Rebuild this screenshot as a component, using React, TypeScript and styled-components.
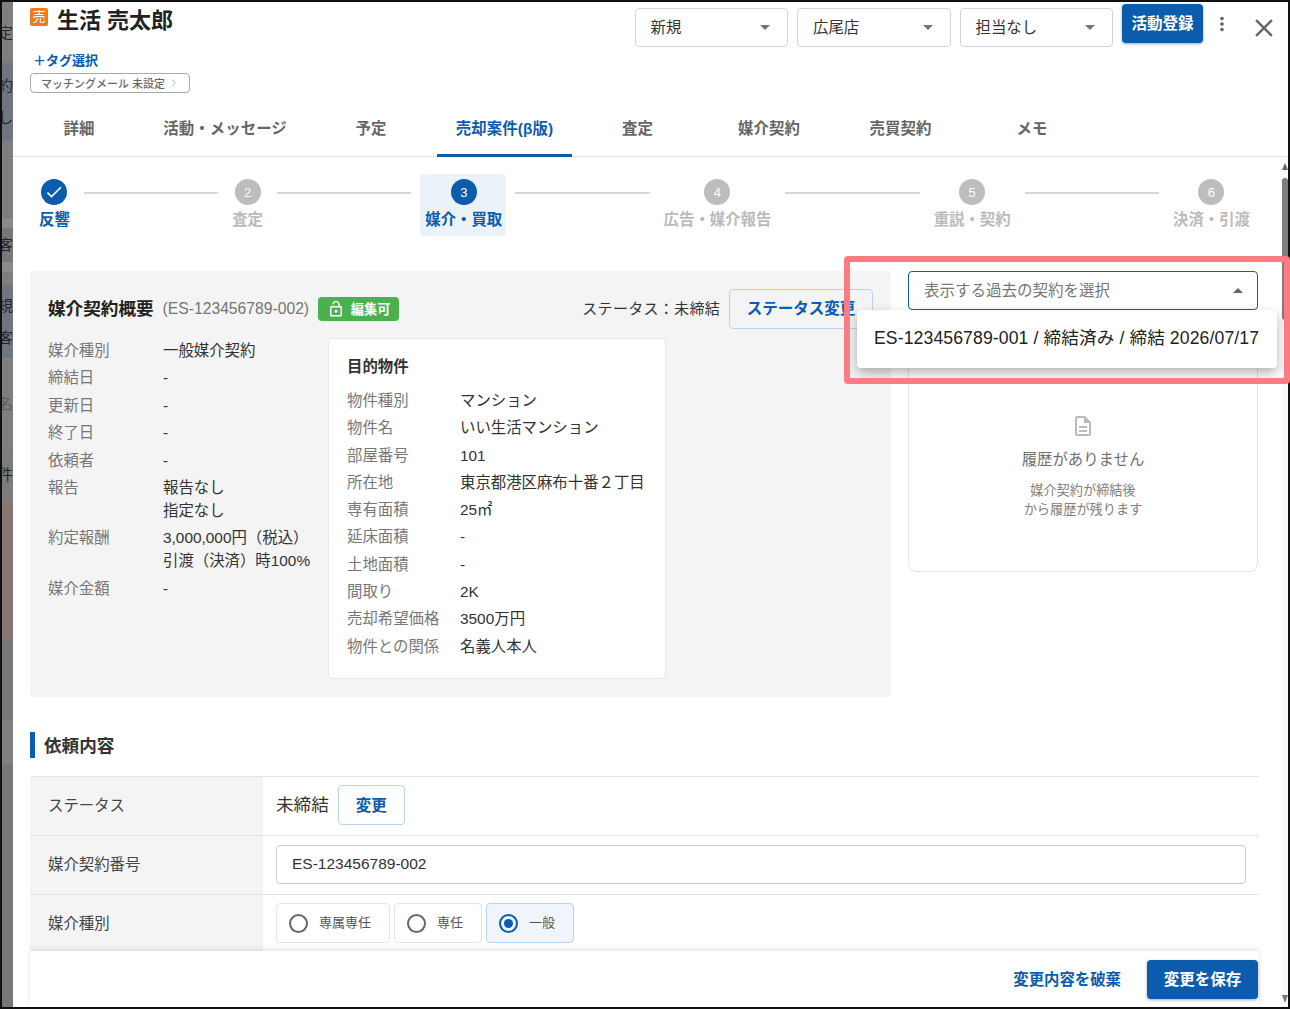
import React from 'react';
import styled, { createGlobalStyle } from 'styled-components';
import { ChevronRight } from 'lucide-react';

const blue = '#0b5cad';
const softBorder = '#b9d2ee';

const GlobalStyle = createGlobalStyle`
  html, body { margin: 0; padding: 0; background: #fff; }
  body {
    font-family: "Liberation Sans", "Noto Sans CJK JP", sans-serif;
    color: #333;
  }
  * { box-sizing: border-box; }
`;

const Page = styled.div`
  position: relative;
  width: 1290px;
  height: 1009px;
  overflow: hidden;
`;

const Frame = styled.div`
  position: relative;
  display: flex;
  width: 100%;
  height: 100%;
  border: 2px solid #111;
  overflow: hidden;
`;

const Backdrop = styled.div`
  flex: 0 0 11px;
  display: flex;
  flex-direction: column;
  overflow: hidden;
`;

const Band = styled.div<{ $h: number; $bg: string; $faded?: boolean }>`
  flex: 0 0 ${p => p.$h}px;
  display: flex;
  flex-direction: column;
  justify-content: center;
  align-items: flex-end;
  gap: 12px;
  background: ${p => p.$bg};
  color: ${p => (p.$faded ? '#5e5e5e' : '#1f2630')};
  font-size: 15px;
  line-height: 20px;
  white-space: nowrap;
`;

const Modal = styled.div`
  flex: 1;
  min-width: 0;
  display: flex;
  flex-direction: column;
  background: #fff;
`;

const TopRow = styled.header`
  flex: 0 0 98px;
  display: flex;
  justify-content: space-between;
  align-items: flex-start;
  padding: 2px 9px 0 17px;
`;

const Identity = styled.div`
  display: flex;
  flex-direction: column;
  align-items: flex-start;
`;

const TitleRow = styled.div`
  display: flex;
  align-items: flex-start;
  gap: 9px;
  height: 30px;
  margin-top: 2px;
`;

const SellerMark = styled.span`
  width: 18px;
  height: 18px;
  margin-top: 2px;
  border-radius: 2px;
  background: #f07a1c;
  color: #fff;
  font-size: 13px;
  line-height: 18px;
  text-align: center;
`;

const Name = styled.h1`
  margin: 2px 0 0;
  font-size: 22px;
  line-height: 26px;
  font-weight: 700;
  color: #222;
`;

const TagLink = styled.a`
  margin: 15px 0 0 3px;
  font-size: 13px;
  line-height: 20px;
  font-weight: 700;
  color: ${blue};
`;

const MailPill = styled.div`
  display: flex;
  align-items: center;
  gap: 3px;
  width: 160px;
  height: 20px;
  margin-top: 2px;
  padding: 0 0 1px 10px;
  border: 1px solid #aaa;
  border-radius: 4px;
  font-size: 10.9px;
  font-weight: 500;
  letter-spacing: 0.1px;
  color: #666;
  white-space: nowrap;
`;

const Actions = styled.div`
  display: flex;
  align-items: flex-start;
  gap: 9px;
`;

const HeaderSelect = styled.div`
  display: flex;
  align-items: center;
  justify-content: space-between;
  width: 153.5px;
  height: 39px;
  margin-top: 4px;
  padding: 0 17px 3px 15px;
  border: 1px solid #d4d4d4;
  border-radius: 4px;
  font-size: 15.4px;
  color: #333;
`;

const Caret = styled.span<{ $up?: boolean }>`
  width: 0;
  height: 0;
  margin-top: 3px;
  border-left: 5px solid transparent;
  border-right: 5px solid transparent;
  ${p => (p.$up ? 'border-bottom: 5px solid #666;' : 'border-top: 5px solid #757575;')}
`;

const PrimaryButton = styled.button<{ $w: number }>`
  width: ${p => p.$w}px;
  height: 39px;
  padding: 0 0 3px;
  border: 0;
  border-radius: 4px;
  background: ${blue};
  color: #fff;
  font: inherit;
  font-size: 15.5px;
  font-weight: 700;
  box-shadow: 0 1px 3px rgba(0, 0, 0, 0.35);
`;

const IconSlot = styled.div<{ $ml: number }>`
  display: flex;
  margin: 9px 0 0 ${p => p.$ml}px;
`;

const Tabs = styled.nav`
  flex: 0 0 57px;
  display: flex;
  border-bottom: 1px solid #e2e2e2;
`;

const Tab = styled.div<{ $w: number; $active?: boolean }>`
  position: relative;
  flex: 0 0 ${p => p.$w}px;
  display: flex;
  align-items: center;
  justify-content: center;
  padding-bottom: 3px;
  font-size: 15.4px;
  font-weight: 700;
  letter-spacing: 0.1px;
  color: ${p => (p.$active ? blue : '#666')};
  white-space: nowrap;

  ${p =>
    p.$active &&
    `&::after {
      content: '';
      position: absolute;
      left: 0;
      right: 0;
      bottom: -1px;
      height: 3px;
      background: ${blue};
    }`}
`;

const Body = styled.main`
  flex: 1;
  min-height: 0;
  overflow: hidden;
  padding: 17px 29px 0 17px;
`;

const Stepper = styled.div`
  display: flex;
  align-items: flex-start;
  height: 62px;
  padding: 0 9px;
`;

const Step = styled.div<{ $current?: boolean }>`
  flex: none;
  display: flex;
  flex-direction: column;
  align-items: center;
  height: 62px;
  padding-top: 5px;
  ${p =>
    p.$current &&
    `margin: 0 -5px;
     padding-left: 5px;
     padding-right: 4px;
     background: #ebf2fa;
     border-radius: 4px;`}
`;

const StepDot = styled.span<{ $on?: boolean }>`
  display: flex;
  align-items: center;
  justify-content: center;
  width: 26px;
  height: 26px;
  border-radius: 50%;
  background: ${p => (p.$on ? blue : '#bdbdbd')};
  color: #fff;
  font-size: 13px;
`;

const StepLabel = styled.span<{ $on?: boolean }>`
  margin-top: 4px;
  font-size: 15.4px;
  line-height: 22px;
  font-weight: 700;
  color: ${p => (p.$on ? blue : '#bbb')};
  white-space: nowrap;
`;

const Connector = styled.span`
  flex: 1;
  height: 2px;
  margin: 18px 14px 0;
  background: #d6d6d6;
`;

const Overview = styled.div`
  display: flex;
  gap: 17px;
  margin-top: 35px;
`;

const SummaryCard = styled.section`
  flex: 0 0 861px;
  height: 426px;
  padding: 18px;
  border-radius: 4px;
  background: #f4f4f4;
`;

const SummaryHead = styled.div`
  display: flex;
  align-items: center;
  height: 39px;
`;

const SummaryTitle = styled.h2`
  margin: 0;
  padding-bottom: 3px;
  font-size: 17.6px;
  font-weight: 700;
  color: #222;
`;

const ContractNo = styled.span`
  margin-left: 9px;
  font-size: 15.7px;
  color: #757575;
`;

const EditBadge = styled.span`
  display: flex;
  align-items: center;
  justify-content: center;
  gap: 6px;
  width: 81px;
  height: 24px;
  margin-left: 9px;
  border-radius: 4px;
  background: #4caf50;
  color: #fff;
  font-size: 13.2px;
  font-weight: 700;
`;

const StatusText = styled.span`
  margin-left: auto;
  padding-bottom: 3px;
  font-size: 15px;
  letter-spacing: 0.3px;
  color: #333;
`;

const OutlineButton = styled.button<{ $w: number }>`
  width: ${p => p.$w}px;
  height: 40px;
  margin-left: 9px;
  padding: 0 0 3px;
  border: 1px solid ${softBorder};
  border-radius: 4px;
  background: transparent;
  color: ${blue};
  font: inherit;
  font-size: 15.5px;
  font-weight: 700;
  white-space: nowrap;
`;

const SummaryBody = styled.div`
  display: flex;
  align-items: flex-start;
  margin-top: 10px;
`;

const FactList = styled.dl<{ $w: number; $gap: number; $label: number; $top?: number }>`
  display: grid;
  grid-template-columns: ${p => p.$label}px 1fr;
  row-gap: ${p => p.$gap}px;
  width: ${p => p.$w}px;
  margin: ${p => p.$top ?? 0}px 0 0;
  font-size: 15.4px;
  line-height: 23px;
`;

const FactLabel = styled.dt`
  color: #777;
`;

const FactValue = styled.dd`
  margin: 0;
  color: #333;
  white-space: pre-line;
`;

const PropertyCard = styled.div`
  flex: 0 0 336px;
  height: 341px;
  padding: 17px 18px;
  border: 1px solid #e8e8e8;
  border-radius: 4px;
  background: #fff;
`;

const PropertyTitle = styled.h3`
  margin: 0 0 11px;
  font-size: 15.4px;
  line-height: 22px;
  font-weight: 700;
  color: #333;
`;

const SideColumn = styled.aside`
  position: relative;
  flex: 0 0 350px;
`;

const PastSelect = styled.div`
  display: flex;
  align-items: center;
  justify-content: space-between;
  height: 39px;
  padding: 0 14px 4px 15px;
  border: 1.5px solid ${blue};
  border-radius: 4px;
  font-size: 15.5px;
  color: #777;
`;

const PastMenu = styled.div`
  position: absolute;
  z-index: 3;
  top: 39px;
  left: -51px;
  width: 420px;
  height: 58px;
  padding: 0 17px;
  border-radius: 4px;
  background: #fff;
  font-size: 17.6px;
  letter-spacing: 0.12px;
  line-height: 57px;
  color: #222;
  white-space: nowrap;
  box-shadow: 0 5px 12px rgba(0, 0, 0, 0.3);
`;

const HistoryCard = styled.div`
  display: flex;
  flex-direction: column;
  align-items: center;
  justify-content: center;
  height: 212px;
  margin-top: 50px;
  border: 1px solid #e4e4e4;
  border-radius: 8px;
`;

const HistoryTitle = styled.div`
  margin-top: 10px;
  font-size: 15.4px;
  line-height: 24px;
  color: #707070;
`;

const HistoryNote = styled.div`
  margin-top: 9px;
  font-size: 13.2px;
  line-height: 19px;
  color: #808080;
  text-align: center;
`;

const SectionTitle = styled.h2`
  height: 26px;
  margin: 35px 0 18px;
  padding-left: 9px;
  border-left: 5px solid ${blue};
  font-size: 17.6px;
  line-height: 29px;
  font-weight: 700;
  color: #333;
`;

const FormTable = styled.div`
  border-top: 1px solid #e4e4e4;
`;

const FormRow = styled.div`
  display: grid;
  grid-template-columns: 233px 1fr;
  height: 59px;
  border-bottom: 1px solid #e4e4e4;
`;

const FormLabel = styled.div`
  display: flex;
  align-items: center;
  padding: 0 0 4px 18px;
  background: #f4f4f4;
  font-size: 15.4px;
  color: #444;
`;

const FormValue = styled.div`
  display: flex;
  align-items: center;
  padding: 0 13px 2px 13px;
  font-size: 17.6px;
  color: #333;
`;

const CurrentStatus = styled.span`
  padding-bottom: 3px;
`;

const TextInput = styled.div`
  display: flex;
  align-items: center;
  width: 100%;
  height: 39px;
  padding-left: 15px;
  border: 1px solid #ccc;
  border-radius: 4px;
  font-size: 15.5px;
`;

const RadioGroup = styled.div`
  display: flex;
  gap: 4px;
`;

const RadioOption = styled.div<{ $w: number; $checked?: boolean }>`
  display: flex;
  align-items: center;
  gap: 11px;
  width: ${p => p.$w}px;
  height: 40px;
  padding-left: 12px;
  border: 1px solid ${p => (p.$checked ? softBorder : '#e4e4e4')};
  border-radius: 4px;
  background: ${p => (p.$checked ? '#f0f5fc' : '#fff')};
  font-size: 13px;
  color: #555;
`;

const RadioText = styled.span`
  padding-bottom: 3px;
`;

const RadioMark = styled.span<{ $checked?: boolean }>`
  flex: none;
  display: flex;
  align-items: center;
  justify-content: center;
  width: 19px;
  height: 19px;
  border: 2px solid ${p => (p.$checked ? blue : '#666')};
  border-radius: 50%;

  &::after {
    content: '';
    display: ${p => (p.$checked ? 'block' : 'none')};
    width: 9px;
    height: 9px;
    border-radius: 50%;
    background: ${blue};
  }
`;

const Footer = styled.footer`
  position: absolute;
  z-index: 2;
  left: 28px;
  bottom: 0;
  display: flex;
  align-items: center;
  justify-content: flex-end;
  gap: 26px;
  width: 1229px;
  height: 56px;
  padding-right: 1px;
  background: #fff;
  box-shadow: 0 -2px 5px rgba(0, 0, 0, 0.1);
`;

const DiscardLink = styled.a`
  padding-bottom: 3px;
  font-size: 15.4px;
  font-weight: 700;
  color: ${blue};
`;

const ScrollRail = styled.div`
  position: absolute;
  top: 155px;
  right: 0;
  bottom: 0;
  display: flex;
  flex-direction: column;
  align-items: center;
  width: 7px;
  padding-top: 6px;
  background: #fafafa;
`;

const ScrollArrow = styled.span<{ $down?: boolean }>`
  width: 0;
  height: 0;
  border-left: 3.5px solid transparent;
  border-right: 3.5px solid transparent;
  ${p =>
    p.$down
      ? 'margin-top: auto; margin-bottom: 4px; border-top: 8px solid #777;'
      : 'border-bottom: 7px solid #666;'}
`;

const ScrollThumb = styled.span`
  width: 6px;
  height: 142px;
  margin-top: 8px;
  border-radius: 3px;
  background: #7d7d7d;
`;

const Annotation = styled.div`
  position: absolute;
  z-index: 5;
  left: 844px;
  top: 256px;
  width: 446px;
  height: 128px;
  border: 6px solid #ff7b83;
  border-radius: 4px;
  pointer-events: none;
`;

const Glyph: React.FC<{ d: string; size: number; color: string }> = ({ d, size, color }) => (
  <svg width={size} height={size} viewBox="0 0 24 24" fill={color}>
    <path d={d} />
  </svg>
);

const icons = {
  check: 'M9 16.17 4.83 12l-1.42 1.41L9 19 21 7l-1.41-1.41z',
  close: 'M19 6.41 17.59 5 12 10.59 6.41 5 5 6.41 10.59 12 5 17.59 6.41 19 12 13.41 17.59 19 19 17.59 13.41 12z',
  more: 'M12 8c1.1 0 2-.9 2-2s-.9-2-2-2-2 .9-2 2 .9 2 2 2zm0 2c-1.1 0-2 .9-2 2s.9 2 2 2 2-.9 2-2-.9-2-2-2zm0 6c-1.1 0-2 .9-2 2s.9 2 2 2 2-.9 2-2-.9-2-2-2z',
  lock: 'M12 17c1.1 0 2-.9 2-2s-.9-2-2-2-2 .9-2 2 .9 2 2 2zm6-9h-1V6c0-2.76-2.24-5-5-5S7 3.24 7 6h1.9c0-1.71 1.39-3.1 3.1-3.1 1.71 0 3.1 1.39 3.1 3.1v2H6c-1.1 0-2 .9-2 2v10c0 1.1.9 2 2 2h12c1.1 0 2-.9 2-2V10c0-1.1-.9-2-2-2zm0 12H6V10h12v10z',
  doc: 'M8 16h8v2H8zm0-4h8v2H8zm6-10H6c-1.1 0-2 .9-2 2v16c0 1.1.89 2 1.99 2H18c1.1 0 2-.9 2-2V8l-6-6zm4 18H6V4h7v5h5v11z',
};

const bands = [
  { h: 61, bg: '#7f7f7f', lines: ['査定'] },
  { h: 78, bg: '#6f7680', lines: ['契約', 'し'] },
  { h: 77, bg: '#7f7f7f', lines: [] },
  { h: 10, bg: '#8a8a8a', lines: [] },
  { h: 34, bg: '#787878', lines: ['顧客'] },
  { h: 10, bg: '#8a8a8a', lines: [] },
  { h: 13, bg: '#7f7f7f', lines: [] },
  { h: 73, bg: '#6f7680', lines: ['新規', '顧客'] },
  { h: 92, bg: '#7f7f7f', lines: ['氏名'], faded: true },
  { h: 50, bg: '#7c7c7c', lines: ['案件'] },
  { h: 140, bg: '#867772', lines: [] },
  { h: 80, bg: '#777777', lines: [] },
  { h: 44, bg: '#808080', lines: [] },
  { h: 243, bg: '#777777', lines: [] },
];

const tabs = [
  { label: '詳細', w: 132 },
  { label: '活動・メッセージ', w: 160 },
  { label: '予定', w: 132 },
  { label: '売却案件(β版)', w: 135, active: true },
  { label: '査定', w: 131 },
  { label: '媒介契約', w: 132 },
  { label: '売買契約', w: 131 },
  { label: 'メモ', w: 132 },
];

const contractFacts = [
  ['媒介種別', '一般媒介契約'],
  ['締結日', '-'],
  ['更新日', '-'],
  ['終了日', '-'],
  ['依頼者', '-'],
  ['報告', '報告なし\n指定なし'],
  ['約定報酬', '3,000,000円（税込）\n引渡（決済）時100%'],
  ['媒介金額', '-'],
];

const propertyFacts = [
  ['物件種別', 'マンション'],
  ['物件名', 'いい生活マンション'],
  ['部屋番号', '101'],
  ['所在地', '東京都港区麻布十番２丁目'],
  ['専有面積', '25㎡'],
  ['延床面積', '-'],
  ['土地面積', '-'],
  ['間取り', '2K'],
  ['売却希望価格', '3500万円'],
  ['物件との関係', '名義人本人'],
];

const steps = ['反響', '査定', '媒介・買取', '広告・媒介報告', '重説・契約', '決済・引渡'];

const radios = [
  { label: '専属専任', w: 114 },
  { label: '専任', w: 88 },
  { label: '一般', w: 88, checked: true },
];

const Facts: React.FC<{ rows: string[][]; w: number; gap: number; label: number; top?: number }> = ({
  rows,
  w,
  gap,
  label,
  top,
}) => (
  <FactList $w={w} $gap={gap} $label={label} $top={top}>
    {rows.map(([k, v]) => (
      <React.Fragment key={k}>
        <FactLabel>{k}</FactLabel>
        <FactValue>{v}</FactValue>
      </React.Fragment>
    ))}
  </FactList>
);

export default function App() {
  return (
    <Page>
      <GlobalStyle />
      <Frame>
        <Backdrop>
          {bands.map((b, i) => (
            <Band key={i} $h={b.h} $bg={b.bg} $faded={b.faded}>
              {b.lines.map(t => (
                <span key={t}>{t}</span>
              ))}
            </Band>
          ))}
        </Backdrop>

        <Modal>
          <TopRow>
            <Identity>
              <TitleRow>
                <SellerMark>売</SellerMark>
                <Name>生活 売太郎</Name>
              </TitleRow>
              <TagLink>＋タグ選択</TagLink>
              <MailPill>
                マッチングメール 未設定
                <ChevronRight size={12} strokeWidth={1.5} color="#999" />
              </MailPill>
            </Identity>
            <Actions>
              {['新規', '広尾店', '担当なし'].map(v => (
                <HeaderSelect key={v}>
                  {v}
                  <Caret />
                </HeaderSelect>
              ))}
              <PrimaryButton $w={81}>活動登録</PrimaryButton>
              <IconSlot $ml={-1}>
                <Glyph d={icons.more} size={22} color="#666" />
              </IconSlot>
              <IconSlot $ml={7}>
                <Glyph d={icons.close} size={30} color="#666" />
              </IconSlot>
            </Actions>
          </TopRow>

          <Tabs>
            {tabs.map(t => (
              <Tab key={t.label} $w={t.w} $active={t.active}>
                {t.label}
              </Tab>
            ))}
          </Tabs>

          <Body>
            <Stepper>
              {steps.map((s, i) => {
                const on = i === 0 || i === 2;
                return (
                  <React.Fragment key={s}>
                    {i > 0 && <Connector />}
                    <Step $current={i === 2}>
                      <StepDot $on={on}>
                        {i === 0 ? <Glyph d={icons.check} size={20} color="#fff" /> : i + 1}
                      </StepDot>
                      <StepLabel $on={on}>{s}</StepLabel>
                    </Step>
                  </React.Fragment>
                );
              })}
            </Stepper>

            <Overview>
              <SummaryCard>
                <SummaryHead>
                  <SummaryTitle>媒介契約概要</SummaryTitle>
                  <ContractNo>(ES-123456789-002)</ContractNo>
                  <EditBadge>
                    <Glyph d={icons.lock} size={18} color="#fff" />
                    編集可
                  </EditBadge>
                  <StatusText>ステータス：未締結</StatusText>
                  <OutlineButton $w={144}>ステータス変更</OutlineButton>
                </SummaryHead>
                <SummaryBody>
                  <Facts rows={contractFacts} w={280} gap={4.4} label={115} top={1} />
                  <PropertyCard>
                    <PropertyTitle>目的物件</PropertyTitle>
                    <Facts rows={propertyFacts} w={300} gap={4.3} label={113} />
                  </PropertyCard>
                </SummaryBody>
              </SummaryCard>

              <SideColumn>
                <PastSelect>
                  表示する過去の契約を選択
                  <Caret $up />
                </PastSelect>
                <PastMenu>ES-123456789-001 / 締結済み / 締結 2026/07/17</PastMenu>
                <HistoryCard>
                  <Glyph d={icons.doc} size={24} color="#bbb" />
                  <HistoryTitle>履歴がありません</HistoryTitle>
                  <HistoryNote>
                    媒介契約が締結後
                    <br />
                    から履歴が残ります
                  </HistoryNote>
                </HistoryCard>
              </SideColumn>
            </Overview>

            <SectionTitle>依頼内容</SectionTitle>
            <FormTable>
              <FormRow>
                <FormLabel>ステータス</FormLabel>
                <FormValue>
                  <CurrentStatus>未締結</CurrentStatus>
                  <OutlineButton $w={67}>変更</OutlineButton>
                </FormValue>
              </FormRow>
              <FormRow>
                <FormLabel>媒介契約番号</FormLabel>
                <FormValue>
                  <TextInput>ES-123456789-002</TextInput>
                </FormValue>
              </FormRow>
              <FormRow>
                <FormLabel>媒介種別</FormLabel>
                <FormValue>
                  <RadioGroup>
                    {radios.map(r => (
                      <RadioOption key={r.label} $w={r.w} $checked={r.checked}>
                        <RadioMark $checked={r.checked} />
                        <RadioText>{r.label}</RadioText>
                      </RadioOption>
                    ))}
                  </RadioGroup>
                </FormValue>
              </FormRow>
            </FormTable>
          </Body>
        </Modal>

        <ScrollRail>
          <ScrollArrow />
          <ScrollThumb />
          <ScrollArrow $down />
        </ScrollRail>

        <Footer>
          <DiscardLink>変更内容を破棄</DiscardLink>
          <PrimaryButton $w={111}>変更を保存</PrimaryButton>
        </Footer>
      </Frame>
      <Annotation />
    </Page>
  );
}
